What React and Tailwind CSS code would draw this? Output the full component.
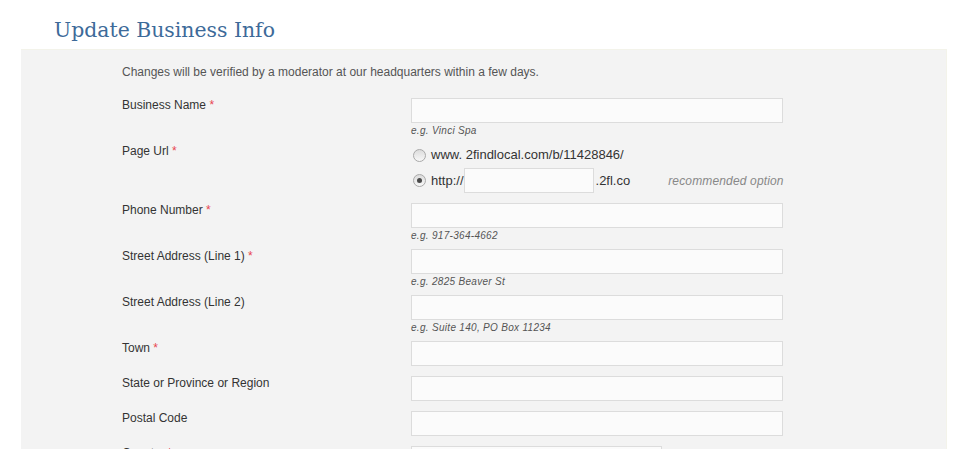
const ROWS = [
  { label: 'Business Name', req: true, hint: 'e.g. Vinci Spa' },
  { label: 'Page Url', req: true, url: true },
  { label: 'Phone Number', req: true, hint: 'e.g. 917-364-4662' },
  { label: 'Street Address (Line 1)', req: true, hint: 'e.g. 2825 Beaver St' },
  { label: 'Street Address (Line 2)', hint: 'e.g. Suite 140, PO Box 11234' },
  { label: 'Town', req: true },
  { label: 'State or Province or Region' },
  { label: 'Postal Code' },
  { label: 'Country', req: true, short: true },
];

function Radio({ checked }) {
  return (
    <span className="w-[13px] h-[13px] rounded-full border border-[#a9a9a9] bg-gradient-to-b from-[#dcdcdc] to-[#f8f8f8] flex items-center justify-center shrink-0">
      {checked && <span className="w-[5px] h-[5px] rounded-full bg-[#4a4a4a]" />}
    </span>
  );
}

function Field({ w = 'w-[372px]' }) {
  return <div className={`${w} h-[25px] border border-[#dcdcdc] bg-[#fbfbfb]`} />;
}

function UrlChoice() {
  return (
    <div className="h-[59px]">
      <div className="h-[22px] flex items-center gap-[5px] pl-[2px] text-[13px] text-[#333]">
        <Radio />
        <span>www. 2findlocal.com/b/11428846/</span>
      </div>
      <div className="mt-[2px] h-[25px] flex items-center pl-[2px] text-[13px] text-[#333]">
        <Radio checked />
        <span className="ml-[5px]">http://</span>
        <Field w="w-[130px]" />
        <span className="ml-[2px]">.2fl.co</span>
        <span className="ml-[38px] italic text-[12px] tracking-[0.15px] text-[#888]">recommended option</span>
      </div>
    </div>
  );
}

export default function App() {
  return (
    <div className="w-[974px] h-[449px] overflow-hidden bg-white font-['Liberation_Sans',Arial,sans-serif]">
      <h1 className="h-[49px] pl-[54px] pt-[17px] font-['DejaVu_Serif',Georgia,serif] text-[20.4px] leading-[26px] text-[#3d6a99]">
        Update Business Info
      </h1>
      <div className="ml-[21px] w-[926px] h-[400px] bg-[#f3f3f3] border-t border-r border-[#f3f3ea] pl-[101px] pt-[15px]">
        <p className="h-[33px] text-[12px] leading-[14px] text-[#555]">
          Changes will be verified by a moderator at our headquarters within a few days.
        </p>
        {ROWS.map((row) => (
          <div key={row.label} className={`flex ${row.hint ? 'h-[46px]' : row.url ? 'h-[59px]' : 'h-[35px]'}`}>
            <div className="w-[289px] pt-[1px] text-[12px] leading-[12px] text-[#333]">
              {row.label}
              {row.req && <span className="text-[#e8454f]"> *</span>}
            </div>
            <div>
              {row.url ? (
                <UrlChoice />
              ) : (
                <>
                  <Field w={row.short ? 'w-[251px]' : 'w-[372px]'} />
                  {row.hint && (
                    <div className="mt-[2px] text-[10px] leading-[12px] italic tracking-[0.3px] text-[#555]">{row.hint}</div>
                  )}
                </>
              )}
            </div>
          </div>
        ))}
      </div>
    </div>
  );
}
